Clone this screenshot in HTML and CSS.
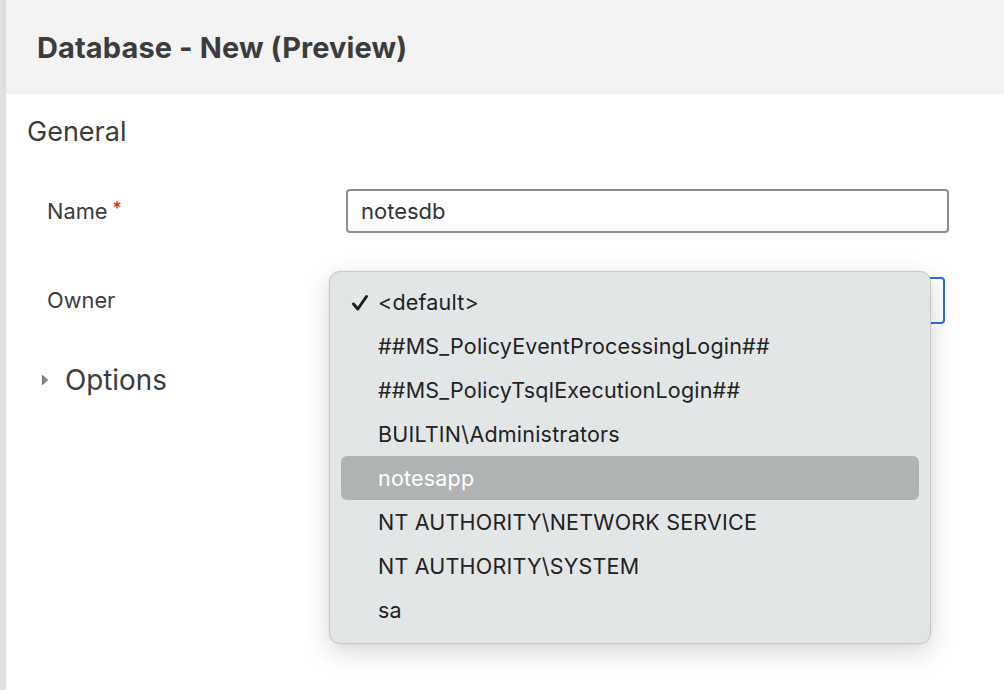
FILE: index.html
```html
<!DOCTYPE html>
<html>
<head>
<meta charset="utf-8">
<link rel="stylesheet" href="styles.css">
</head>
<body>
<div class="app">
  <div class="strip"></div>
  <div class="main">
    <header class="header"><h1 class="title">Database - New (Preview)</h1></header>
    <section class="content">
      <h2 class="section-title">General</h2>
      <div class="row row-name">
        <div class="label">Name<span class="req">*</span></div>
        <div class="field input">notesdb</div>
      </div>
      <div class="row row-owner">
        <div class="label">Owner</div>
        <div class="field select"></div>
      </div>
      <div class="options">
        <svg class="caret" width="8" height="12" viewBox="0 0 8 12"><path d="M1.5 1.5 L6.5 6 L1.5 10.5 Z" fill="#8a8a8a" stroke="#6a6a6a" stroke-width="1" stroke-linejoin="round"/></svg>
        <span>Options</span>
      </div>
    </section>
  </div>
  <div class="menu">
    <div class="item checked"><span class="check"><svg width="18" height="18" viewBox="0 0 18 18"><path d="M2.5 10 L6.8 15 L15.5 2.5" fill="none" stroke="#1e1e1e" stroke-width="3" stroke-linecap="round" stroke-linejoin="round"/></svg></span>&lt;default&gt;</div>
    <div class="item">##MS_PolicyEventProcessingLogin##</div>
    <div class="item">##MS_PolicyTsqlExecutionLogin##</div>
    <div class="item">BUILTIN\Administrators</div>
    <div class="item active">notesapp</div>
    <div class="item">NT AUTHORITY\NETWORK SERVICE</div>
    <div class="item">NT AUTHORITY\SYSTEM</div>
    <div class="item">sa</div>
  </div>
</div>
</body>
</html>
```
FILE: styles.css
```css
html, body {
  margin: 0;
  padding: 0;
  background: #ffffff;
}
body {
  font-family: Inter, "Liberation Sans", Arial, sans-serif;
  color: #3b3b3b;
}
.app {
  position: relative;
  display: flex;
  width: 1004px;
  height: 690px;
  overflow: hidden;
}
.strip {
  width: 6px;
  flex: none;
  background: #e0e0e0;
}
.main {
  flex: 1;
  display: flex;
  flex-direction: column;
}
.header {
  height: 94px;
  background: #f3f3f3;
  display: flex;
  align-items: center;
  padding-left: 31px;
}
.title {
  margin: 0;
  font-size: 29px;
  font-weight: 700;
  color: #3c3c3c;
  letter-spacing: 0.1px;
}
.content {
  padding: 16px 0 0 21px;
}
.section-title {
  margin: 0;
  font-size: 27px;
  font-weight: 400;
  color: #3c3c3c;
  line-height: 44px;
}
.row {
  display: flex;
  align-items: center;
  height: 44px;
}
.row-name { margin-top: 35px; }
.row-owner { margin-top: 45px; }
.label {
  width: 299px;
  padding-left: 20px;
  font-size: 21.8px;
  color: #3c3c3c;
}
.req {
  color: #e51400;
  font-size: 18px;
  margin-left: 5px;
  vertical-align: 4px;
}
.field {
  box-sizing: border-box;
  height: 44px;
  border-radius: 4px;
  font-size: 22px;
  color: #333;
  display: flex;
  align-items: center;
  padding-left: 13px;
}
.input {
  width: 603px;
  border: 2px solid #8c8c8c;
}
.select {
  width: 599px;
  height: 47px;
  border: 2.5px solid #2f6fd6;
}
.options {
  display: flex;
  align-items: center;
  margin-top: 36px;
  padding-left: 14px;
  height: 44px;
  font-size: 27.8px;
  color: #3c3c3c;
}
.caret {
  margin-right: 16px;
}
.menu {
  position: absolute;
  left: 329px;
  top: 271px;
  width: 602px;
  height: 373px;
  box-sizing: border-box;
  padding: 8px 11px 12px 11px;
  background: #e3e6e6;
  border: 1px solid #c6c8c8;
  border-radius: 11px;
  box-shadow: 0 8px 26px rgba(0,0,0,0.16), 0 0 2px rgba(0,0,0,0.08);
}
.item {
  position: relative;
  height: 44px;
  line-height: 44px;
  padding-left: 37px;
  border-radius: 6px;
  font-size: 21.5px;
  color: #222;
  letter-spacing: 0.2px;
}
.item.active {
  background: #b0b3b4;
  color: #ffffff;
}
.check {
  position: absolute;
  left: 10px;
  top: 14px;
  width: 18px;
  height: 18px;
  line-height: 0;
}
```
